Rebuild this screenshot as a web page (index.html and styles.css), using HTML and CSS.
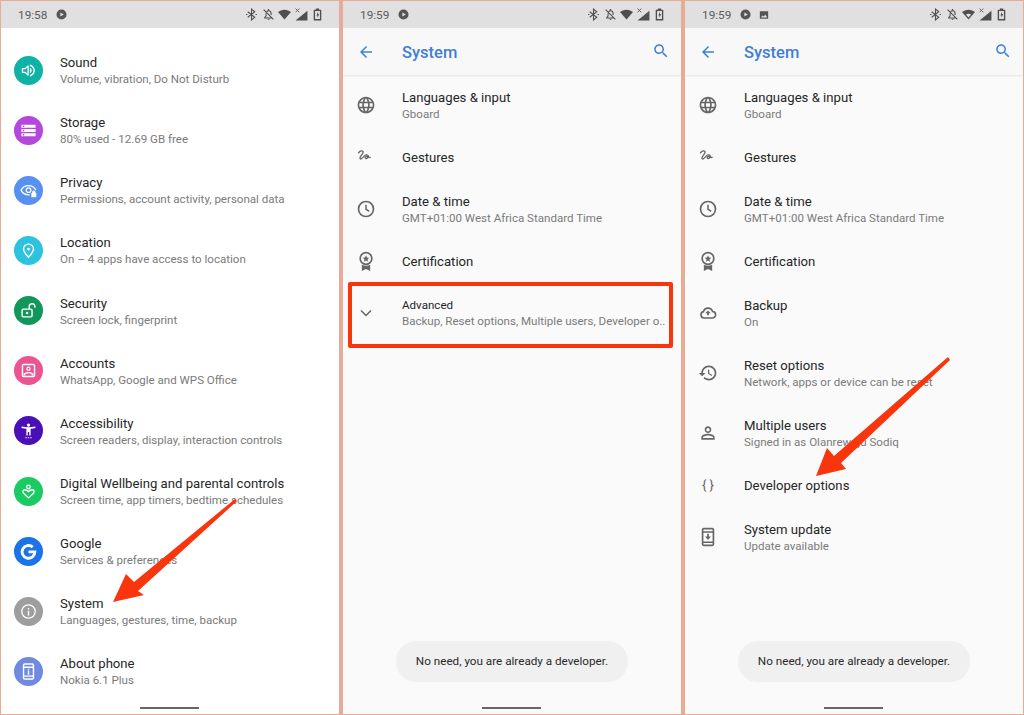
FILE: index.html
```html
<!DOCTYPE html>
<html lang="en">
<head>
<meta charset="utf-8">
<title>Android System settings</title>
<link rel="stylesheet" href="styles.css">
</head>
<body>
<svg class="sprite" xmlns="http://www.w3.org/2000/svg">
  <symbol id="s-play" viewBox="0 0 24 24"><path fill="currentColor" d="M12 1a11 11 0 1 0 0 22 11 11 0 0 0 0-22zM9.5 7.5l7.5 4.5-7.5 4.500z" fill-rule="evenodd"/></symbol>
  <symbol id="s-image" viewBox="0 0 24 24"><path fill="currentColor" d="M2 3h20v18H2zM4.500 18h15l-4.500-7-3.500 4.500-2.500-2.500z" fill-rule="evenodd"/></symbol>
  <symbol id="s-bt" viewBox="0 0 24 24"><path fill="none" stroke="currentColor" stroke-width="2" d="M5 7l13 10-6 5V2l6 5L5 17"/><path fill="currentColor" d="M2 11h2.500v2H2zM19.500 11H22v2h-2.500z"/></symbol>
  <symbol id="s-bell" viewBox="0 0 24 24"><path fill="none" stroke="currentColor" stroke-width="2" d="M3 3l18 18M7.500 9.500V15l-2.500 2.500v1h13.500M8.500 6.500C9.500 5.400 10.700 5 12 5c3 0 4.800 2.300 4.800 5.300V13"/><path fill="currentColor" d="M10 20h4a2 2 0 0 1-4 0zM10.800 2h2.400v3h-2.400z"/></symbol>
  <symbol id="s-wifi" viewBox="0 0 24 24"><path fill="currentColor" d="M12 21L0 7.500C3.200 4.800 7.300 3 12 3s8.800 1.800 12 4.500z"/></symbol>
  <symbol id="s-wifi2" viewBox="0 0 24 24"><path fill="currentColor" d="M12 21L0 7.500C3.200 4.800 7.300 3 12 3s8.800 1.800 12 4.500zM12 17.500l4.800-5.400C15.400 11 13.800 10.400 12 10.400s-3.400.6-4.800 1.700z" fill-rule="evenodd"/></symbol>
  <symbol id="s-signal" viewBox="0 0 24 24"><path fill="currentColor" d="M1 23L23 5v18z"/><path fill="none" stroke="currentColor" stroke-width="1.500" d="M1 1l7 7M8 1L1 8"/></symbol>
  <symbol id="s-batt" viewBox="0 0 24 24"><path fill="currentColor" fill-rule="evenodd" d="M9 1h6v2h3a1 1 0 0 1 1 1v18a1 1 0 0 1-1 1H6a1 1 0 0 1-1-1V4a1 1 0 0 1 1-1h3zM7.500 5.500v15h9v-15z"/><path fill="currentColor" d="M13 7l-3 7h2v4l3-7h-2z"/></symbol>

  <symbol id="i-sound" viewBox="0 0 24 24"><path fill="none" stroke="#fff" stroke-width="1.800" stroke-linejoin="round" d="M3.500 9.500v5h3.500l4.500 4V5.500L7 9.500z"/><path fill="#fff" d="M14 8v8c1.500-.7 2.500-2.300 2.500-4S15.500 8.700 14 8zM14 3.500v2.100c2.900.9 5 3.300 5 6.400s-2.100 5.500-5 6.400v2.100c4-.9 7-4.400 7-8.500S18 4.400 14 3.500z"/></symbol>
  <symbol id="i-storage" viewBox="0 0 24 24"><path fill="#fff" d="M2 20h20v-4H2v4zm2-3h2v2H4v-2zM2 4v4h20V4H2zm4 3H4V5h2v2zm-4 7h20v-4H2v4zm2-3h2v2H4v-2z"/></symbol>
  <symbol id="i-privacy" viewBox="0 0 24 24"><path fill="none" stroke="#fff" stroke-width="1.800" d="M13.500 18C8 18.500 3.500 15.500 1.500 11.500 3.500 7.500 7.500 5 12 5s8.500 2.500 10.500 6.500"/><circle cx="12" cy="11.500" r="3.300" fill="none" stroke="#fff" stroke-width="1.800"/><path fill="#fff" d="M16 15.500h1v-1a2.500 2.500 0 0 1 5 0v1h1v6h-7z"/></symbol>
  <symbol id="i-location" viewBox="0 0 24 24"><path fill="none" stroke="#fff" stroke-width="2" d="M12 3a7 7 0 0 0-7 7c0 4.500 4.500 8.500 7 11.500 2.500-3 7-7 7-11.500a7 7 0 0 0-7-7z"/><circle cx="12" cy="10" r="2" fill="#fff"/></symbol>
  <symbol id="i-security" viewBox="0 0 24 24"><rect x="3" y="10" width="14" height="11" rx="1.500" fill="none" stroke="#fff" stroke-width="2"/><circle cx="10" cy="15.500" r="1.800" fill="#fff"/><path fill="none" stroke="#fff" stroke-width="2" d="M13 10V6.500a4 4 0 0 1 8 0V8"/></symbol>
  <symbol id="i-accounts" viewBox="0 0 24 24"><rect x="3.500" y="3.500" width="17" height="17" rx="1.500" fill="none" stroke="#fff" stroke-width="2"/><circle cx="12" cy="9.500" r="2.300" fill="none" stroke="#fff" stroke-width="1.600"/><path fill="#fff" d="M5 19v-2.500c2-1.700 4.500-2.500 7-2.500s5 .8 7 2.500V19h-2.500v-1.700C15 16.400 13.500 16 12 16s-3 .4-4.500 1.300V19z"/></symbol>
  <symbol id="i-access" viewBox="0 0 24 24"><path fill="#fff" d="M21.500 6.500c-3 .7-6.500 1-9.500 1s-6.500-.3-9.500-1L2 8.500c2 .5 4.800.9 7 1V19h2v-5h2v5h2V9.500c2.200-.1 5-.5 7-1l-.5-2z"/><circle cx="12" cy="4.300" r="2.300" fill="#fff"/><path fill="#fff" d="M7.500 21.500h2v1.500h-2zM11 21.500h2v1.500h-2zM14.500 21.500h2v1.500h-2z"/></symbol>
  <symbol id="i-well" viewBox="0 0 24 24"><circle cx="12" cy="5.500" r="2.500" fill="none" stroke="#fff" stroke-width="1.900"/><path fill="none" stroke="#fff" stroke-width="1.900" d="M12 21l-7-6.500c-2-2.500-.5-5 2-5 2 0 3.500 1 5 2.500 1.500-1.500 3-2.500 5-2.500 2.500 0 4 2.500 2 5z"/></symbol>
  <symbol id="i-google" viewBox="0 0 24 24"><path fill="none" stroke="#fff" stroke-width="4" d="M18 5.800A9 9 0 1 0 21 12.500H12"/></symbol>
  <symbol id="i-info" viewBox="0 0 24 24"><circle cx="12" cy="12" r="9.500" fill="none" stroke="#fff" stroke-width="1.800"/><path fill="#fff" d="M11 11h2v6.500h-2zM11 7h2v2.200h-2z"/></symbol>
  <symbol id="i-phone" viewBox="0 0 24 24"><rect x="5" y="1.500" width="14" height="21" rx="1.500" fill="none" stroke="#fff" stroke-width="2"/><path fill="#fff" d="M5 5h14v2H5zM5 17.500h14v2H5zM11 10.500h2v6h-2zM11 8h2v1.500h-2z"/></symbol>

  <symbol id="a-back" viewBox="0 0 24 24"><path fill="currentColor" d="M20 11H7.830l5.590-5.590L12 4l-8 8 8 8 1.410-1.410L7.830 13H20v-2z"/></symbol>
  <symbol id="a-search" viewBox="0 0 24 24"><path fill="currentColor" d="M15.500 14h-.79l-.28-.27C15.410 12.590 16 11.110 16 9.500 16 5.910 13.090 3 9.500 3S3 5.910 3 9.500 5.910 16 9.500 16c1.610 0 3.090-.59 4.230-1.570l.27.28v.79l5 4.990L20.490 19l-4.990-5zm-6 0C7.010 14 5 11.990 5 9.500S7.010 5 9.500 5 14 7.010 14 9.500 11.990 14 9.500 14z"/></symbol>
  <symbol id="l-globe" viewBox="0 0 24 24"><path fill="currentColor" d="M11.990 2C6.470 2 2 6.480 2 12s4.470 10 9.990 10C17.520 22 22 17.520 22 12S17.520 2 11.990 2zm6.930 6h-2.950c-.32-1.250-.78-2.450-1.380-3.560 1.840.63 3.370 1.910 4.330 3.560zM12 4.040c.83 1.200 1.480 2.530 1.910 3.960h-3.820c.43-1.430 1.080-2.760 1.910-3.960zM4.260 14C4.100 13.360 4 12.690 4 12s.1-1.360.26-2h3.380c-.08.660-.14 1.320-.14 2 0 .68.060 1.340.14 2H4.260zm.82 2h2.950c.32 1.250.78 2.450 1.380 3.560-1.840-.63-3.370-1.900-4.330-3.560zm2.950-8H5.080c.96-1.660 2.490-2.930 4.330-3.560C8.810 5.550 8.350 6.750 8.030 8zM12 19.960c-.83-1.200-1.480-2.530-1.910-3.960h3.820c-.43 1.430-1.080 2.760-1.910 3.960zM14.340 14H9.660c-.09-.66-.16-1.320-.16-2 0-.68.070-1.350.16-2h4.680c.09.650.16 1.320.16 2 0 .68-.07 1.340-.16 2zm.25 5.560c.6-1.110 1.060-2.310 1.380-3.560h2.950c-.96 1.650-2.490 2.930-4.330 3.560zM16.360 14c.08-.66.14-1.320.14-2 0-.68-.06-1.340-.14-2h3.380c.16.64.26 1.310.26 2s-.1 1.360-.26 2h-3.380z"/></symbol>
  <symbol id="l-gesture" viewBox="0 0 24 24"><path fill="none" stroke="currentColor" stroke-width="1.600" stroke-linecap="round" stroke-linejoin="round" d="M3 7C5 4 9 4 8.500 6.500 8 9 3.500 12 5 14c1.500 2 4.500-4 7-4.500 3-.5 4 2.500 1.500 4-2 1.500-3.500-1.500-1.500-2 2-.5 3.500 1.500 5 1"/></symbol>
  <symbol id="l-clock" viewBox="0 0 24 24"><circle cx="12" cy="12" r="9" fill="none" stroke="currentColor" stroke-width="2"/><path fill="none" stroke="currentColor" stroke-width="1.800" d="M12 7v5.300l3.800 2.500"/></symbol>
  <symbol id="l-cert" viewBox="0 0 24 24"><circle cx="12" cy="9" r="7" fill="none" stroke="currentColor" stroke-width="2"/><path fill="currentColor" d="M12 5l1.200 2.800 2.800.3-2.100 1.900.6 2.900-2.500-1.500-2.500 1.500.6-2.900L8 8.100l2.800-.3zM7 16.500c3 1.700 7 1.700 10 0V24l-5-2.500L7 24z"/></symbol>
  <symbol id="l-chev" viewBox="0 0 24 24"><path fill="none" stroke="currentColor" stroke-width="1.800" d="M6 9l6 6 6-6"/></symbol>
  <symbol id="l-cloud" viewBox="-2 -2 28 28"><path fill="none" stroke="currentColor" stroke-width="2.200" d="M6.500 19a4.500 4.500 0 0 1-.8-8.900A6.500 6.500 0 0 1 18.300 10a4.500 4.500 0 0 1-.3 9z"/><path fill="currentColor" d="M12 8.500l3.800 4h-2.600V15h-2.400v-2.500H8.200z"/></symbol>
  <symbol id="l-history" viewBox="0 0 24 24"><path fill="currentColor" d="M13 3c-4.970 0-9 4.030-9 9H1l3.890 3.890.07.14L9 12H6c0-3.870 3.130-7 7-7s7 3.130 7 7-3.130 7-7 7c-1.930 0-3.680-.79-4.940-2.060l-1.420 1.420C8.270 19.990 10.510 21 13 21c4.970 0 9-4.030 9-9s-4.030-9-9-9zm-1 5v5l4.280 2.540.72-1.210-3.500-2.080V8H12z"/></symbol>
  <symbol id="l-person" viewBox="0 0 24 24"><path fill="currentColor" d="M12 5.900c1.160 0 2.100.94 2.100 2.100s-.94 2.100-2.100 2.100S9.900 9.160 9.900 8s.94-2.100 2.100-2.100m0 9c2.970 0 6.100 1.460 6.100 2.100v1.100H5.900V17c0-.64 3.130-2.100 6.100-2.100M12 4C9.790 4 8 5.790 8 8s1.790 4 4 4 4-1.790 4-4-1.790-4-4-4zm0 9c-2.670 0-8 1.340-8 4v3h16v-3c0-2.660-5.330-4-8-4z"/></symbol>
  <symbol id="l-update" viewBox="0 0 24 24"><rect x="5.500" y="2" width="13" height="20" rx="1.500" fill="none" stroke="currentColor" stroke-width="2"/><path fill="currentColor" d="M5.500 5h13v1.800h-13zM5.500 17.500h13v1.800h-13zM11 8h2v3.500h2.500L12 15.500l-3.500-4H11z"/></symbol>
</svg>

<main class="page">
  <section class="phone phone-white">
    <div class="status">
      <span class="time">19:58</span>
      <svg class="st-play"><use href="#s-play"/></svg>
      <span class="status-right">
        <svg class="st"><use href="#s-bt"/></svg><svg class="st"><use href="#s-bell"/></svg><svg class="st"><use href="#s-wifi"/></svg><svg class="st"><use href="#s-signal"/></svg><svg class="st"><use href="#s-batt"/></svg>
      </span>
    </div>
    <ul class="list list-main">
      <li class="row main-row"><span class="circle c-sound"><svg class="glyph"><use href="#i-sound"/></svg></span><div class="text"><p class="title">Sound</p><p class="sub">Volume, vibration, Do Not Disturb</p></div></li>
      <li class="row main-row"><span class="circle c-storage"><svg class="glyph"><use href="#i-storage"/></svg></span><div class="text"><p class="title">Storage</p><p class="sub">80% used - 12.69 GB free</p></div></li>
      <li class="row main-row"><span class="circle c-privacy"><svg class="glyph"><use href="#i-privacy"/></svg></span><div class="text"><p class="title">Privacy</p><p class="sub">Permissions, account activity, personal data</p></div></li>
      <li class="row main-row"><span class="circle c-location"><svg class="glyph"><use href="#i-location"/></svg></span><div class="text"><p class="title">Location</p><p class="sub">On – 4 apps have access to location</p></div></li>
      <li class="row main-row"><span class="circle c-security"><svg class="glyph"><use href="#i-security"/></svg></span><div class="text"><p class="title">Security</p><p class="sub">Screen lock, fingerprint</p></div></li>
      <li class="row main-row"><span class="circle c-accounts"><svg class="glyph"><use href="#i-accounts"/></svg></span><div class="text"><p class="title">Accounts</p><p class="sub">WhatsApp, Google and WPS Office</p></div></li>
      <li class="row main-row"><span class="circle c-access"><svg class="glyph"><use href="#i-access"/></svg></span><div class="text"><p class="title">Accessibility</p><p class="sub">Screen readers, display, interaction controls</p></div></li>
      <li class="row main-row"><span class="circle c-well"><svg class="glyph"><use href="#i-well"/></svg></span><div class="text"><p class="title">Digital Wellbeing and parental controls</p><p class="sub">Screen time, app timers, bedtime schedules</p></div></li>
      <li class="row main-row"><span class="circle c-google"><svg class="glyph"><use href="#i-google"/></svg></span><div class="text"><p class="title">Google</p><p class="sub">Services &amp; preferences</p></div></li>
      <li class="row main-row"><span class="circle c-system"><svg class="glyph"><use href="#i-info"/></svg></span><div class="text"><p class="title">System</p><p class="sub">Languages, gestures, time, backup</p></div></li>
      <li class="row main-row"><span class="circle c-about"><svg class="glyph"><use href="#i-phone"/></svg></span><div class="text"><p class="title">About phone</p><p class="sub">Nokia 6.1 Plus</p></div></li>
    </ul>
    <div class="home"></div>
  </section>

  <section class="phone">
    <div class="status">
      <span class="time">19:59</span>
      <svg class="st-play"><use href="#s-play"/></svg>
      <span class="status-right">
        <svg class="st"><use href="#s-bt"/></svg><svg class="st"><use href="#s-bell"/></svg><svg class="st"><use href="#s-wifi"/></svg><svg class="st"><use href="#s-signal"/></svg><svg class="st"><use href="#s-batt"/></svg>
      </span>
    </div>
    <header class="appbar"><svg class="ab-back"><use href="#a-back"/></svg><h1 class="ab-title">System</h1><svg class="ab-search"><use href="#a-search"/></svg></header>
    <ul class="list">
      <li class="row tall"><svg class="lead"><use href="#l-globe"/></svg><div class="text"><p class="title">Languages &amp; input</p><p class="sub">Gboard</p></div></li>
      <li class="row short"><svg class="lead"><use href="#l-gesture"/></svg><div><p class="title">Gestures</p></div></li>
      <li class="row tall"><svg class="lead"><use href="#l-clock"/></svg><div class="text"><p class="title">Date &amp; time</p><p class="sub">GMT+01:00 West Africa Standard Time</p></div></li>
      <li class="row short"><svg class="lead"><use href="#l-cert"/></svg><div><p class="title">Certification</p></div></li>
      <li class="row tall"><svg class="lead"><use href="#l-chev"/></svg><div><p class="title title-sm">Advanced</p><p class="sub sub-tight">Backup, Reset options, Multiple users, Developer o..</p></div><span class="redbox"></span></li>
    </ul>
    <div class="toast">No need, you are already a developer.</div>
    <div class="home"></div>
  </section>

  <section class="phone">
    <div class="status">
      <span class="time">19:59</span>
      <svg class="st-play"><use href="#s-play"/></svg>
      <svg class="st-img"><use href="#s-image"/></svg>
      <span class="status-right">
        <svg class="st"><use href="#s-bt"/></svg><svg class="st"><use href="#s-bell"/></svg><svg class="st"><use href="#s-wifi2"/></svg><svg class="st"><use href="#s-signal"/></svg><svg class="st"><use href="#s-batt"/></svg>
      </span>
    </div>
    <header class="appbar"><svg class="ab-back"><use href="#a-back"/></svg><h1 class="ab-title">System</h1><svg class="ab-search"><use href="#a-search"/></svg></header>
    <ul class="list">
      <li class="row tall"><svg class="lead"><use href="#l-globe"/></svg><div class="text"><p class="title">Languages &amp; input</p><p class="sub">Gboard</p></div></li>
      <li class="row short"><svg class="lead"><use href="#l-gesture"/></svg><div><p class="title">Gestures</p></div></li>
      <li class="row tall"><svg class="lead"><use href="#l-clock"/></svg><div class="text"><p class="title">Date &amp; time</p><p class="sub">GMT+01:00 West Africa Standard Time</p></div></li>
      <li class="row short"><svg class="lead"><use href="#l-cert"/></svg><div><p class="title">Certification</p></div></li>
      <li class="row tall"><svg class="lead"><use href="#l-cloud"/></svg><div class="text"><p class="title">Backup</p><p class="sub">On</p></div></li>
      <li class="row tall"><svg class="lead"><use href="#l-history"/></svg><div class="text"><p class="title">Reset options</p><p class="sub">Network, apps or device can be reset</p></div></li>
      <li class="row tall"><svg class="lead"><use href="#l-person"/></svg><div class="text"><p class="title">Multiple users</p><p class="sub">Signed in as Olanrewaju Sodiq</p></div></li>
      <li class="row short"><span class="lead lead-text">{ }</span><div><p class="title">Developer options</p></div></li>
      <li class="row tall"><svg class="lead"><use href="#l-update"/></svg><div class="text"><p class="title">System update</p><p class="sub">Update available</p></div></li>
    </ul>
    <div class="toast">No need, you are already a developer.</div>
    <div class="home"></div>
  </section>

  <svg class="annot" viewBox="0 0 1024 715" xmlns="http://www.w3.org/2000/svg">
    <polygon class="arrow" points="113,602 126,574 134,582 235,499 237,501 138,591 144,595"/>
    <polygon class="arrow" points="816,476 827,448 834,456 948,357 950,360 841,463 846,469"/>
  </svg>
</main>
</body>
</html>
```
FILE: styles.css
```css
* { box-sizing: border-box; }
html, body { margin: 0; height: 715px; overflow: hidden; }
body { background: #e8ab95; font-family: Roboto, "Liberation Sans", sans-serif; }
p, h1, ul { margin: 0; padding: 0; }
ul { list-style: none; }
.sprite { display: none; }

.page {
  position: relative;
  display: grid;
  grid-template-columns: repeat(3, 338px);
  column-gap: 4px;
  padding: 1px;
  height: 715px;
}
.phone {
  position: relative;
  display: flex;
  flex-direction: column;
  height: 713px;
  background: #fafafa;
  overflow: hidden;
}
.phone-white { background: #fff; }

.status {
  display: flex;
  align-items: center;
  flex: none;
  height: 27px;
  padding: 0 15px 0 17px;
  background: #e0e0e0;
  color: #5c5c5c;
}
.time { font-size: 11.8px; width: 37px; }
.st { width: 13px; height: 13px; color: #4f4f4f; flex: none; }
.st-play { flex: none; width: 11px; height: 11px; margin-left: 1px; color: #555; }
.st-img { flex: none; width: 10px; height: 10px; margin-left: 8px; color: #555; }
.status-right { display: flex; align-items: center; gap: 3.5px; margin-left: auto; }

.appbar {
  display: flex;
  align-items: center;
  flex: none;
  height: 47px;
  padding: 0 11px 0 14px;
  background: #f8f8f8;
  box-shadow: 0 1px 2px rgba(0, 0, 0, .1);
  color: #3f7fd4;
}
.ab-back { width: 18px; height: 18px; margin-right: 27px; }
.ab-title { font-size: 16.5px; font-weight: 500; color: #3f7fd4; padding-top: 2px; }
.ab-search { width: 18px; height: 18px; margin-left: auto; margin-top: -2px; }

.list-main { padding-top: 12px; }
.row { position: relative; display: flex; align-items: center; padding-left: 13px; }
.main-row { height: 60.15px; }
.tall { height: 60px; }
.short { height: 44px; }
.text { padding-top: 2px; }

.title { font-size: 13.15px; line-height: 17px; color: #262626; white-space: nowrap; }
.sub { font-size: 11.55px; line-height: 17px; color: #7a7a7a; white-space: nowrap; }
.title-sm { font-size: 11.6px; line-height: 16px; }
.sub-tight { line-height: 16px; }

.circle {
  display: flex;
  align-items: center;
  justify-content: center;
  flex: none;
  width: 29px;
  height: 29px;
  margin-right: 17px;
  border-radius: 50%;
}
.glyph { width: 17px; height: 17px; }
.c-sound { background: #0eb3a6; }
.c-storage { background: #b548dc; }
.c-privacy { background: #5690f0; }
.c-location { background: #2dc3de; }
.c-security { background: #11975a; }
.c-accounts { background: #ec5491; }
.c-access { background: #4a0fb5; }
.c-well { background: #1bcb62; }
.c-google { background: #1a73e8; }
.c-system { background: #9e9e9e; }
.c-about { background: #6f8ade; }

.lead { flex: none; width: 20px; height: 20px; margin-right: 26px; color: #666; }
.lead-text { font-size: 13px; line-height: 20px; text-align: center; white-space: nowrap; }

.redbox {
  position: absolute;
  left: 5px;
  top: -1px;
  width: 325px;
  height: 66px;
  border: 4px solid #f8350c;
  border-radius: 2px;
}

.toast {
  position: absolute;
  left: 53px;
  top: 640px;
  width: 232px;
  height: 41px;
  border-radius: 20px;
  background: #f0f0f0;
  color: #2a2a2a;
  font-size: 11.7px;
  line-height: 41px;
  text-align: center;
}
.home {
  position: absolute;
  left: 139px;
  bottom: 5px;
  width: 59px;
  height: 2px;
  background: #666;
}
.annot { position: absolute; left: 0; top: 0; width: 1024px; height: 715px; pointer-events: none; }
.arrow { fill: #f8350c; }
```
